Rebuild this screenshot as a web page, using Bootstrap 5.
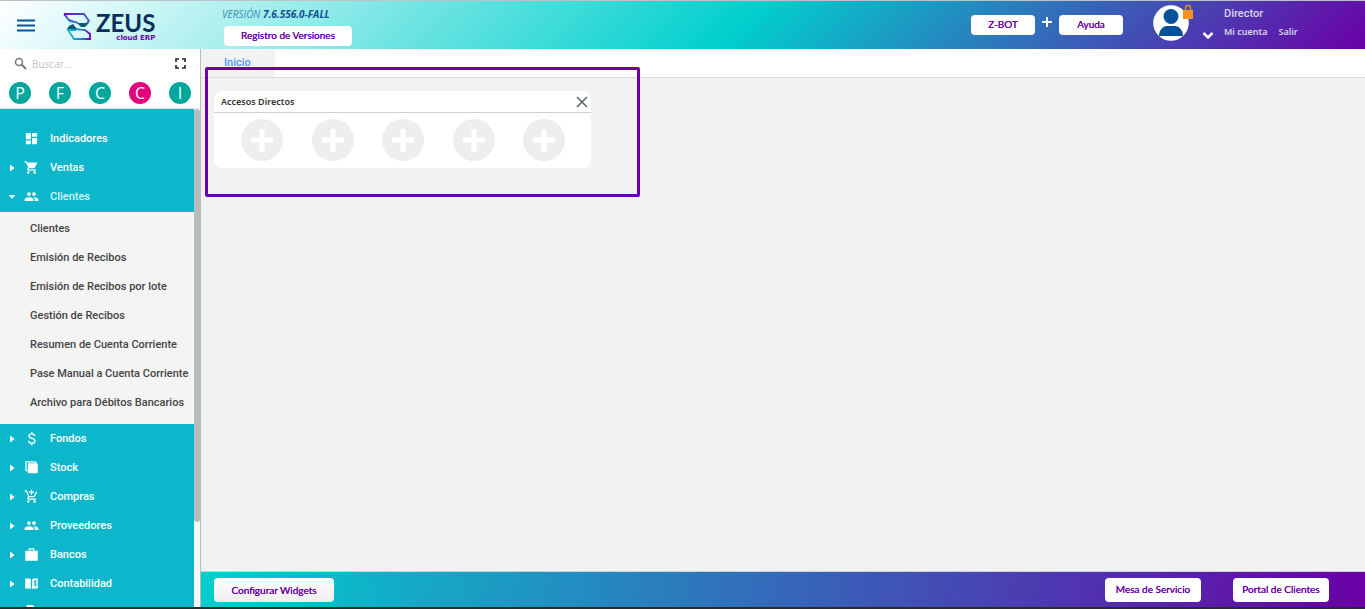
<!DOCTYPE html>
<html lang="es">
<head>
<meta charset="utf-8">
<meta name="viewport" content="width=device-width, initial-scale=1">
<title>Zeus cloud ERP</title>
<link href="https://cdn.jsdelivr.net/npm/bootstrap@5.3.0/dist/css/bootstrap.min.css" rel="stylesheet">
<style>
  :root { --violet: #6a00a6; --aqua: #00d0cd; --menu: #0db7cb; }
  body { font-family: Roboto, sans-serif; font-size: 11px; line-height: 16px; background: #f1f3f3; }
  a { text-decoration: none; }
  button { font-family: inherit; }
  .top-bar { height: 49px; border-top: 1px solid #bbc3c4; background: linear-gradient(135deg, #fff 0%, var(--aqua) 54%, var(--violet) 100%); }
  .brand-side { width: 222px; padding-left: 17px; gap: 28px; }
  .brand-name { font: 700 24px/21px Lato, sans-serif; color: #0b2c5f; }
  .brand-sub { font: 700 7px/10px "DejaVu Sans", sans-serif; color: var(--violet); }
  .release { padding-top: 6px; gap: 5px; }
  .version { font: italic 400 10px/14px "Open Sans", sans-serif; color: #3d8db5; }
  .version strong { color: #14508f; font-weight: 700; }
  .pill { font: 400 10px/18px Lato, sans-serif; color: var(--violet); text-shadow: 0 0 0 var(--violet); background: #fff; border: 0; border-radius: 4px; height: 20px; padding: 0 0 2px; }
  .pill:hover { background: #eee; color: var(--violet); }
  .pill-s { width: 64px; } .pill-m { width: 96px; } .pill-l { width: 128px; margin-left: 2px; } .pill-c { width: 120px; }
  .bottom-bar .pill { height: 24px; line-height: 22px; }
  .pill.pill-c { background: linear-gradient(#fff, #eee); padding: 1px 0 0; }
  .avatar { width: 42px; height: 38px; margin-left: 28px; }
  .user-menu { padding-bottom: 4px; }
  .chevron { margin: 26px 0 0 7px; }
  .user-col { width: 141px; color: #dcd6ec; line-height: 18px; font-weight: 500; }
  .user-col a { color: #dcd6ec; font: 600 9px/18px "Noto Sans", sans-serif; margin-right: 11px; }
  .side { width: 201px; background: #fff; border-right: 1px solid #bbb; }
  .search-row { height: 29px; padding: 0 14px; }
  .search-row input { border: 0; outline: 0; padding: 0 0 0 1px; font: 400 10px/16px "Open Sans", sans-serif; }
  .search-row input::placeholder { color: #c2c6c8; }
  .quick-row { padding: 4px 9px; border-bottom: 1px solid #e2e2e2; height: 31px; }
  .quick { width: 22px; height: 22px; border-radius: 50%; background: #00a79d; color: #fff; font: 400 16px/22px "Open Sans", sans-serif; text-align: center; }
  .quick:hover { color: #fff; }
  .quick-pink { background: #e5007e; }
  .menu { background: var(--menu); padding-top: 15px; font-weight: 500; }
  .menu-item { height: 29px; color: #fff; padding-left: 8px; }
  .menu-item svg { flex: none; }
  .menu-item .arrow { width: 8px; height: 8px; margin-right: 8px; }
  .menu-item .glyph { width: 15px; height: 15px; margin-right: 11px; }
  .open { color: #d8f4f7; }
  .submenu { background: #f4f4f4; padding: 2px 0 7px; margin-top: 1px; }
  .submenu a { display: block; padding-left: 30px; line-height: 29px; color: #444; white-space: nowrap; }
  .track { width: 6px; background: #fafafa; }
  .thumb { height: 83%; background: #b8bbbe; border-radius: 3px; }
  .tabs { height: 29px; background: #fff; border-bottom: 1px solid #d9dbdb; }
  .tab-on { background: #f1f3f3; color: #4f93f5; width: 74px; padding-left: 23px; line-height: 28px; font-weight: 500; }
  .work { padding: 13px; }
  .panel { width: 377px; background: #fff; border-radius: 8px; }
  .panel-head { height: 22px; border-bottom: 1px solid #d0d0d0; padding: 0 3px 0 7px; }
  .panel-head h2 { font: 600 9px/21px "Noto Sans", sans-serif; color: #333; }
  .panel-body { padding: 6px 26px 7px 27px; }
  .bare { border: 0; background: none; padding: 0; line-height: 0; }
  .frame { position: absolute; left: 4px; top: 18px; width: 435px; height: 130px; border: 3px solid var(--violet); border-radius: 2px; pointer-events: none; }
  .bottom-bar { height: 36px; border-top: 1px solid #d0d0d0; background: linear-gradient(100deg, var(--aqua), var(--violet)); padding: 0 36px 0 13px; }
  .bottom-strip { height: 2px; background: #2b2b2b; }
</style>
</head>
<body class="vh-100 overflow-hidden d-flex flex-column">

<svg class="d-none">
  <symbol id="closed" viewBox="0 0 8 8"><path fill="currentColor" d="M2 0.500L6.500 4 2 7.500z"/></symbol>
  <symbol id="people" viewBox="0 0 24 24"><path fill="currentColor" d="M16 11c1.660 0 3-1.340 3-3s-1.340-3-3-3-3 1.340-3 3 1.340 3 3 3zM8 11c1.660 0 3-1.340 3-3S9.660 5 8 5 5 6.340 5 8s1.340 3 3 3zm0 2c-2.330 0-7 1.170-7 3.500V19h14v-2.500C15 14.170 10.330 13 8 13zm8 0-1 .05c1.200.84 2 1.970 2 3.450V19h6v-2.500c0-2.330-4.670-3.500-7-3.500z"/></symbol>
  <symbol id="plus" viewBox="0 0 42 42"><circle cx="21" cy="21" r="21" fill="#eee"/><path d="M21 10v23M10 21h22" stroke="#fff" stroke-width="5"/></symbol>
</svg>

<header class="top-bar d-flex flex-shrink-0">
  <div class="brand-side d-flex align-items-center flex-shrink-0">
    <button class="bare" aria-label="Menú"><svg width="18" height="13" viewBox="0 0 18 13"><path d="M0 1.500h18M0 6.500h18M0 11.500h18" stroke="#0a529c" stroke-width="2"/></svg></button>
    <a href="#" class="d-flex align-items-start pt-1" aria-label="Zeus cloud ERP">
      <svg width="29" height="28" viewBox="0 0 29 28" fill="none" class="me-1">
        <defs><linearGradient id="lg" x1="0" x2="1"><stop stop-color="#6a12b0"/><stop offset="1" stop-color="#3f5fc8"/></linearGradient>
        <linearGradient id="lh" x1="0" x2="1"><stop stop-color="#12bdcb"/><stop offset=".6" stop-color="#2b86c8"/><stop offset="1" stop-color="#6a00a6"/></linearGradient></defs>
        <path d="M1 2h20l5 7-2 2M1 2l5 6 9 3" stroke="url(#lg)" stroke-width="1.800"/>
        <path d="M3 5l4 5h7" stroke="#12a8c9" stroke-width="1.200"/>
        <path d="M12 17l10 1 5 4v5H11l-6-9h8" stroke="url(#lh)" stroke-width="1.800"/>
        <path d="M4 17l2-3 4-2 4 5zM14 11h12l-4 4h-4z" fill="#0b5a70"/>
      </svg>
      <span class="d-flex flex-column align-items-end">
        <span class="brand-name">ZEUS</span><span class="brand-sub">cloud ERP</span>
      </span>
    </a>
  </div>
  <div class="release d-flex flex-column">
    <span class="version">VERSIÓN <strong>7.6.556.0-FALL</strong></span>
    <button class="pill pill-l">Registro de Versiones</button>
  </div>
  <div class="user-menu ms-auto d-flex align-items-center">
    <button class="pill pill-s mt-1">Z-BOT</button>
    <svg width="24" height="20" viewBox="0 0 24 20"><path d="M12 4v10M7 9h10" stroke="#fff" stroke-width="2"/></svg>
    <button class="pill pill-s mt-1">Ayuda</button>
    <svg class="avatar" viewBox="0 0 42 38"><circle cx="20" cy="19" r="17.800" fill="#fff"/><ellipse cx="20" cy="12.500" rx="7.500" ry="7.500" fill="#03509b"/><path d="M8 32c0-7 5-10 8-10h8c3 0 8 3 8 10z" fill="#03509b"/><path d="M32 6h10v9H32z" fill="#f7941d"/><path d="M34.500 6V4a2.500 2.500 0 0 1 5 0v2" fill="none" stroke="#d98a32" stroke-width="1.500"/></svg>
    <button class="bare chevron" aria-label="Opciones"><svg width="16" height="8" viewBox="0 0 16 8"><path d="M3.500 1L8 5.500 12.500 1" stroke="#fff" stroke-width="2.500" fill="none"/></svg></button>
    <div class="user-col ms-2 d-flex flex-column">
      <span>Director</span>
      <span><a href="#">Mi cuenta</a><a href="#">Salir</a></span>
    </div>
  </div>
</header>

<div class="d-flex flex-grow-1 overflow-hidden">
  <aside class="side d-flex flex-column flex-shrink-0">
    <div class="search-row d-flex align-items-center flex-shrink-0">
      <svg class="flex-shrink-0 me-1" width="13" height="13" viewBox="0 0 13 13" fill="none" stroke="#777"><circle cx="5" cy="5" r="3.500" stroke-width="1.500"/><path d="M7.500 7.500l4.500 4.500" stroke-width="2"/></svg>
      <input type="search" class="flex-grow-1 w-100" placeholder="Buscar..." aria-label="Buscar">
      <button class="bare" aria-label="Pantalla completa"><svg width="11" height="11" viewBox="0 0 11 11" fill="none" stroke="#222" stroke-width="1.600"><path d="M1 4V1h3M7 1h3v3M10 7v3H7M4 10H1V7"/></svg></button>
    </div>
    <div class="quick-row d-flex justify-content-between flex-shrink-0">
      <a class="quick" href="#">P</a><a class="quick" href="#">F</a><a class="quick" href="#">C</a><a class="quick quick-pink" href="#">C</a><a class="quick" href="#">I</a>
    </div>
    <div class="d-flex flex-grow-1 overflow-hidden">
      <nav class="menu flex-grow-1 overflow-hidden">
        <a href="#" class="menu-item d-flex align-items-center"><span class="arrow"></span><svg class="glyph" viewBox="0 0 24 24"><path fill="currentColor" d="M3 13h8V3H3v10zm0 8h8v-6H3v6zm10 0h8V11h-8v10zm0-18v6h8V3h-8z"/></svg>Indicadores</a>
        <a href="#" class="menu-item d-flex align-items-center"><svg class="arrow"><use href="#closed"/></svg><svg class="glyph" viewBox="0 0 24 24"><path fill="currentColor" d="M7 18c-1.100 0-2 .9-2 2s.9 2 2 2 2-.9 2-2-.9-2-2-2zM1 2v2h2l3.600 7.590-1.350 2.450C4.520 15.370 5.480 17 7 17h12v-2H7.420c-.14 0-.25-.11-.25-.25l.03-.12.9-1.630h7.450c.75 0 1.410-.41 1.750-1.030l3.580-6.490C21.250 4.820 20.760 4 20 4H5.210l-.94-2H1zm16 16c-1.100 0-2 .9-2 2s.9 2 2 2 2-.9 2-2-.9-2-2-2z"/></svg>Ventas</a>
        <a href="#" class="menu-item open d-flex align-items-center"><svg class="arrow" viewBox="0 0 8 8"><path fill="currentColor" d="M0.500 2h7L4 6z"/></svg><svg class="glyph text-white"><use href="#people"/></svg>Clientes</a>
        <div class="submenu">
          <a href="#">Clientes</a>
          <a href="#">Emisión de Recibos</a>
          <a href="#">Emisión de Recibos por lote</a>
          <a href="#">Gestión de Recibos</a>
          <a href="#">Resumen de Cuenta Corriente</a>
          <a href="#">Pase Manual a Cuenta Corriente</a>
          <a href="#">Archivo para Débitos Bancarios</a>
        </div>
        <a href="#" class="menu-item d-flex align-items-center"><svg class="arrow"><use href="#closed"/></svg><svg class="glyph" viewBox="0 0 24 24"><path d="M17 8c0-2.500-2-3.500-4.500-3.500S8 5.800 8 8c0 5 9.500 2.800 9.500 8 0 2.300-2 3.600-5 3.600S7.500 18 7.500 15.500M12.500 1v4M12.500 19v4" fill="none" stroke="currentColor" stroke-width="2.200"/></svg>Fondos</a>
        <a href="#" class="menu-item d-flex align-items-center"><svg class="arrow"><use href="#closed"/></svg><svg class="glyph" viewBox="0 0 24 24"><rect x="6" y="5" width="16" height="16" rx="2" fill="currentColor"/><path d="M5 18L3 16V3H17l3 2" fill="none" stroke="currentColor" stroke-width="2"/></svg>Stock</a>
        <a href="#" class="menu-item d-flex align-items-center"><svg class="arrow"><use href="#closed"/></svg><svg class="glyph" viewBox="0 0 24 24"><path fill="currentColor" d="M11 9h2V6h3V4h-3V1h-2v3H8v2h3v3zm-4 9c-1.100 0-2 .9-2 2s.9 2 2 2 2-.9 2-2-.9-2-2-2zm10 0c-1.100 0-2 .9-2 2s.9 2 2 2 2-.9 2-2-.9-2-2-2zm-9.830-3.250.03-.12.9-1.630h7.450c.75 0 1.410-.41 1.750-1.030l3.860-7.010L19.420 4l-1.100 2-2.760 5H8.530L4.270 2H1v2h2l3.600 7.590-1.350 2.450C4.520 15.370 5.480 17 7 17h12v-2H7.420c-.13 0-.25-.11-.25-.25z"/></svg>Compras</a>
        <a href="#" class="menu-item d-flex align-items-center"><svg class="arrow"><use href="#closed"/></svg><svg class="glyph"><use href="#people"/></svg>Proveedores</a>
        <a href="#" class="menu-item d-flex align-items-center"><svg class="arrow"><use href="#closed"/></svg><svg class="glyph" viewBox="0 0 24 24"><path d="M2 6h20v16H2z" fill="currentColor"/><path d="M8.500 6V3h7v3" fill="none" stroke="currentColor" stroke-width="2"/></svg>Bancos</a>
        <a href="#" class="menu-item d-flex align-items-center"><svg class="arrow"><use href="#closed"/></svg><svg class="glyph" viewBox="0 0 24 24"><path d="M2 4h7l2 1v16l-2-1H2zM15 4h7v16h-7l-2 1V5z" fill="currentColor"/><path d="M20 9c-.5-1.500-4-1.500-4 .5 0 2.500 4 1.500 4 4 0 2-3.500 2-4 0M18 6.500v11" fill="none" stroke="#0db7cb" stroke-width="1.500"/></svg>Contabilidad</a>
        <a href="#" class="menu-item d-flex align-items-center"><span class="arrow"></span><svg class="glyph" viewBox="0 0 24 24"><path d="M4 0h10l6 6v16H4z" fill="currentColor"/></svg></a>
      </nav>
      <div class="track"><div class="thumb"></div></div>
    </div>
  </aside>

  <main class="flex-grow-1 d-flex flex-column position-relative">
    <nav class="tabs"><a href="#" class="tab-on d-block">Inicio</a></nav>
    <div class="work flex-grow-1">
      <section class="panel">
        <div class="panel-head d-flex align-items-center justify-content-between">
          <h2 class="m-0">Accesos Directos</h2>
          <button class="bare" aria-label="Cerrar"><svg width="12" height="12" viewBox="0 0 12 12"><path d="M1 1l10 10M11 1L1 11" stroke="#5d686e" stroke-width="1.600"/></svg></button>
        </div>
        <div class="panel-body d-flex justify-content-between">
          <button class="bare" aria-label="Agregar"><svg width="42" height="42"><use href="#plus"/></svg></button>
          <button class="bare" aria-label="Agregar"><svg width="42" height="42"><use href="#plus"/></svg></button>
          <button class="bare" aria-label="Agregar"><svg width="42" height="42"><use href="#plus"/></svg></button>
          <button class="bare" aria-label="Agregar"><svg width="42" height="42"><use href="#plus"/></svg></button>
          <button class="bare" aria-label="Agregar"><svg width="42" height="42"><use href="#plus"/></svg></button>
        </div>
      </section>
    </div>
    <div class="frame"></div>
    <footer class="bottom-bar d-flex align-items-center">
      <button class="pill pill-c me-auto">Configurar Widgets</button>
      <button class="pill pill-m me-4">Mesa de Servicio</button>
      <button class="pill pill-m ms-2">Portal de Clientes</button>
    </footer>
  </main>
</div>
<div class="bottom-strip flex-shrink-0"></div>
<script src="https://cdn.jsdelivr.net/npm/bootstrap@5.3.0/dist/js/bootstrap.bundle.min.js"></script>
</body>
</html>
